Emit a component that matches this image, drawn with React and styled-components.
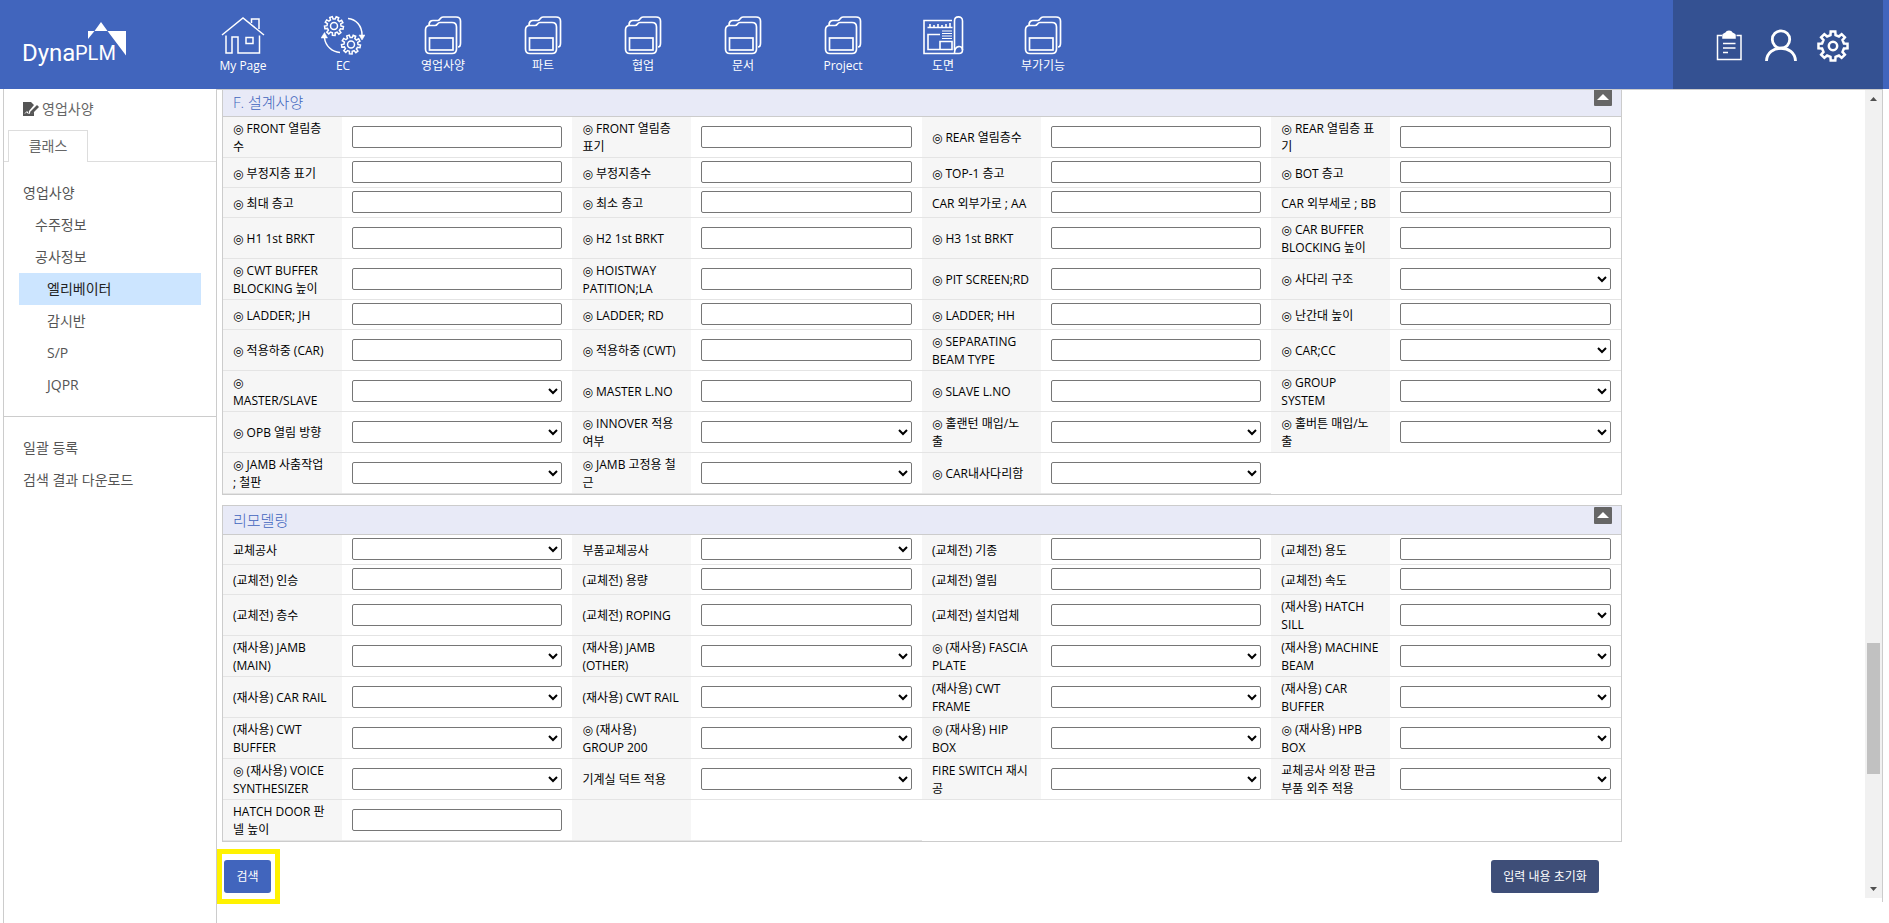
import React from 'react';
import styled, { createGlobalStyle } from 'styled-components';

const GlobalStyle = createGlobalStyle`
  * {
    box-sizing: border-box;
  }
  body {
    margin: 0;
    background: #fff;
    color: #000;
    font-family: "Open Sans", "DejaVu Sans", "Noto Sans CJK KR", sans-serif;
    font-size: 12px;
    line-height: 18px;
  }
  button, input, select {
    font: inherit;
  }
  a {
    color: inherit;
    text-decoration: none;
  }
`;

const Page = styled.div`
  display: flex;
  flex-direction: column;
  min-height: 100vh;
`;

/* ---------- top bar ---------- */

const Header = styled.header`
  display: flex;
  height: 89px;
  padding-right: 6px;
  background: #4165bd;
  color: #fff;
`;

const Logo = styled.a`
  flex: none;
  width: 193px;
  padding-left: 20px;
`;

const Nav = styled.nav`
  display: flex;
  flex: 1;
`;

const NavLink = styled.a`
  display: flex;
  flex-direction: column;
  align-items: center;
  width: 100px;
  padding-top: 15px;

  svg {
    display: block;
    margin-bottom: 2px;
  }
`;

const UserTools = styled.div`
  display: flex;
  justify-content: flex-end;
  align-items: center;
  gap: 20px;
  width: 210px;
  padding: 2px 34px 0 0;
  background: #345192;
`;

const ToolButton = styled.button`
  width: 32px;
  height: 34px;
  padding: 0;
  border: 0;
  background: none;
  color: #fff;
  cursor: pointer;

  svg {
    display: block;
  }
`;

/* ---------- sidebar ---------- */

const Body = styled.div`
  display: flex;
  flex: 1;
  padding: 0 6px 0 3px;
`;

const Sidebar = styled.aside`
  flex: none;
  width: 214px;
  border-left: 1px solid #ccc;
  border-right: 1px solid #ccc;
  color: #555;
  font-size: 14px;
`;

const SideTitle = styled.h1`
  display: flex;
  align-items: center;
  gap: 3px;
  height: 41px;
  margin: 0;
  padding: 0 0 2px 19px;
  color: #666;
  font-size: 14px;
  font-weight: 400;
`;

const Tabs = styled.div`
  display: flex;
  height: 32px;
  padding-left: 4px;
  box-shadow: inset 0 -1px #ddd;
`;

const Tab = styled.button`
  width: 80px;
  padding: 0 0 2px;
  border: 1px solid #ddd;
  border-bottom: 0;
  background: #fff;
  color: #666;
  font-size: 14px;
`;

const Tree = styled.ul`
  margin: 0;
  padding: 15px;
  list-style: none;

  & + & {
    border-top: 1px solid #ccc;
  }
`;

const TreeLink = styled.a`
  display: block;
  height: 32px;
  padding-left: ${p => 4 + p.$level * 12}px;
  line-height: 32px;
  background: ${p => (p.$active ? '#cce5ff' : 'none')};
  color: ${p => (p.$active ? '#222' : '#555')};
`;

/* ---------- form ---------- */

const Main = styled.main`
  display: flex;
  flex: 1;
  min-width: 0;
  border-top: 1px solid #ccc;
`;

const Content = styled.form`
  flex: 1;
  min-width: 0;
  overflow: hidden;
`;

const Sections = styled.div`
  display: flex;
  flex-direction: column;
  gap: 10px;
  width: calc(85% - 1px);
  margin: -3px 0 0 5px;
`;

const Section = styled.section`
  border: 1px solid #ccc;
`;

const SectionHead = styled.div`
  display: flex;
  justify-content: space-between;
  height: 29px;
  padding: 0 9px 0 10px;
  border-bottom: 1px solid #ccc;
  background: #e8eaf7;
`;

const SectionTitle = styled.h2`
  margin: 0;
  color: #4165bd;
  font-size: 15px;
  font-weight: 300;
  line-height: 28px;
`;

const Collapse = styled.button`
  width: 18px;
  height: 17px;
  margin-top: 1px;
  padding: 0;
  border: 0;
  border-radius: 1px;
  background: #666;

  svg {
    display: block;
  }
`;

const Grid = styled.table`
  width: 100%;
  border-spacing: 0;
  table-layout: fixed;
`;

const LabelCol = styled.col`
  width: 119px;
`;

const Row = styled.tr`
  height: ${p => (p.$tall ? 41 : 30)}px;
`;

const LabelCell = styled.th`
  padding: 3px 10px 1px;
  border-bottom: 1px solid #e4e4e4;
  background: #f6f6f6;
  font-weight: 400;
  text-align: left;
  white-space: pre-line;
`;

const FieldCell = styled.td`
  padding: 0 10px 1px;
  border-bottom: 1px solid #e4e4e4;
`;

const TextBox = styled.input`
  display: block;
  width: 100%;
  height: 22px;
  padding: 0 4px;
  border: 1px solid #767676;
  border-radius: 2px;
  background: #fff;
`;

const Select = styled.select`
  display: block;
  width: 100%;
  height: 22px;
  padding: 0;
  border: 1px solid #767676;
  border-radius: 2px;
  background: #fff;
`;

const Actions = styled.div`
  display: flex;
  justify-content: space-between;
  align-items: center;
  width: calc(85% - 1px);
  margin-top: 7px;
  padding-right: 18px;
`;

const Highlight = styled.div`
  padding: 6px 4px 6px 2px;
  border: 5px solid #fff200;
`;

const Button = styled.button`
  display: block;
  min-width: 47px;
  height: 33px;
  padding: 1px 12px 0;
  border: 0;
  border-radius: 3px;
  background: ${p => (p.$dark ? '#3e4e78' : '#4165bd')};
  color: #fff;
`;

/* ---------- scroll bar ---------- */

const ScrollBar = styled.div`
  display: flex;
  flex-direction: column;
  width: 18px;
  margin-bottom: 21px;
  padding-bottom: 4px;
  border-right: 1px solid #ccc;
`;

const Track = styled.div`
  flex: ${p => p.$grow} 0 0;
  background: #f1f1f1;
`;

const Thumb = styled.div`
  height: 131px;
  border: solid #f1f1f1;
  border-width: 0 2px;
  background: #c1c1c1;
`;

const Arrow = styled.svg`
  display: block;
  background: #f1f1f1;
`;

/* ---------- icons ---------- */

function gear(cx, cy, outer, inner, teeth, turn = 0) {
  const step = (Math.PI * 2) / teeth;
  const points = [];
  for (let i = 0; i < teeth; i++) {
    const a = i * step + turn;
    [[-0.29, inner], [-0.2, outer], [0.2, outer], [0.29, inner]].forEach(([k, r]) => {
      points.push(`${(cx + Math.cos(a + k * step) * r).toFixed(2)} ${(cy + Math.sin(a + k * step) * r).toFixed(2)}`);
    });
  }
  return `M${points.join('L')}Z`;
}

const LogoArt = () => (
  <svg width="110" height="75" viewBox="20 0 110 75" fill="#fff">
    <path d="M101 22 L107.5 31 H94.5Z M88 31 H94.5 L88 39Z M107.5 31 H126 V55.5Z" />
    <text x="22" y="61" fontFamily="Roboto" fontSize="24" fontWeight="400">Dyna</text>
    <text x="75" y="60" fontFamily="Roboto" fontSize="20" fontWeight="400">PLM</text>
  </svg>
);

const HomeIcon = () => (
  <svg width="44" height="40" viewBox="0 0 44 40" fill="none" stroke="#fff" strokeWidth="1.5">
    <path d="M1 20 L22 3 L43 20" />
    <path d="M30.5 8 V4 H38 V14" />
    <path d="M5 20.5 V38 H11 V22 H17 V38 H38.5 V20.5" />
    <rect x="25" y="22.5" width="7" height="6" />
  </svg>
);

const GearsIcon = () => (
  <svg width="44" height="40" viewBox="0 0 44 40" fill="none" stroke="#fff" strokeWidth="1.5">
    <path d={gear(13, 11, 9.5, 7, 9, 0.2)} />
    <circle cx="13" cy="11" r="3.5" />
    <path d={gear(30, 29.5, 9.5, 7, 9, 0.2)} />
    <circle cx="30" cy="29.5" r="3.5" />
    <path d="M27 3.5 C35 4 41 11 41 20" />
    <path d="M38 20 H44 L41 25Z M0 23 H6.5 L3.5 17.5Z" fill="#fff" strokeWidth="0.5" />
    <path d="M3.5 23 C4.5 31 11 37 19 37.5" />
  </svg>
);

const FolderIcon = () => (
  <svg width="44" height="40" viewBox="0 0 44 40" fill="none" stroke="#fff" strokeWidth="1.7">
    <path d="M8 10 C8 7 10 5.500 12 5.500 H17 C19 5.500 19 2 22 2 H35 C38 2 39.500 3.500 39.500 6 V28 C39.500 30.500 38.500 32 37 32" />
    <path d="M4.500 15 C4.500 12 6 10.500 9 10.500 H14 C17 10.500 16 7.500 19 7.500 H31 C34 7.500 35.500 9 35.500 12 V34 C35.500 37 34 38.500 31 38.500 H9 C6 38.500 4.500 37 4.500 34 Z" />
    <rect x="8.5" y="23" width="23.5" height="12" />
  </svg>
);

const DrawingIcon = () => (
  <svg width="44" height="40" viewBox="0 0 44 40" fill="none" stroke="#fff" strokeWidth="1.6">
    <path d="M31 5.500 H3 V38.500 H38 C40 38.500 41.500 37 41.500 35 V6 C41.500 0.500 33.500 0.500 33.500 6 V35" />
    <path d="M33.500 38 C33.500 30 41.500 30 41.500 35" />
    <path d="M6.500 12.500 H31.500 M9 12 V9 M13 12 V10 M17 12 V9 M21 12 V10 M25 12 V9 M29 12 V8" />
    <path d="M19 19.500 H7 V34.500 H31 V26.500 H19 V34.500" />
    <path d="M21 16 H31 M21 18.500 H31 M21 21 H31 M21 23.500 H31" strokeWidth="1.2" />
  </svg>
);

const ClipboardIcon = () => (
  <svg width="32" height="34" viewBox="0 0 32 34" fill="none" stroke="#fff" strokeWidth="1.5">
    <path d="M9 6.500 H4.500 V30.500 H28 V6.500 H23.500" />
    <path d="M10 9 V6 C10 5 12 5 13 4 C14 1.500 18 1.500 19 4 C20 5 22 5 22 6 V9Z" fill="#fff" />
    <path d="M10 14.500 H22.500 M10 19 H22.500 M10 23.500 H15" />
  </svg>
);

const UserIcon = () => (
  <svg width="32" height="34" viewBox="0 0 32 34" fill="none" stroke="#fff" strokeWidth="2.8">
    <circle cx="16" cy="10.500" r="8.700" />
    <path d="M1.500 32 C2 15 30 15 30.500 32" />
  </svg>
);

const SettingsIcon = () => (
  <svg width="32" height="34" viewBox="0 0 32 34" fill="none" stroke="#fff" strokeWidth="2.5">
    <path d={gear(16, 17, 14.7, 11.2, 8)} />
    <circle cx="16" cy="17" r="4.200" />
  </svg>
);

const NoteIcon = () => (
  <svg width="16" height="16" viewBox="0 0 16 16" fill="#555">
    <path d="M0 1 H8 L11 4 L6 10 L5.500 13 L9 12.500 L11 10.500 V15 H0Z" />
    <path d="M14 4 L16 6 L9.500 12.500 L6.500 13.500 L7.500 10.500Z" />
    <path d="M2 12.500 L4 10.500 L5 12.500" fill="none" stroke="#fff" />
  </svg>
);

const UpIcon = () => (
  <svg width="18" height="17" viewBox="0 0 18 17">
    <path d="M3 11 L9 5 L15 11Z" fill="#fff" />
  </svg>
);

/* ---------- data ---------- */

const NAV = [
  ['My Page', HomeIcon],
  ['EC', GearsIcon],
  ['영업사양', FolderIcon],
  ['파트', FolderIcon],
  ['협업', FolderIcon],
  ['문서', FolderIcon],
  ['Project', FolderIcon],
  ['도면', DrawingIcon],
  ['부가기능', FolderIcon],
];

const TREE = [
  ['영업사양', 0],
  ['수주정보', 1],
  ['공사정보', 1],
  ['엘리베이터', 2],
  ['감시반', 2],
  ['S/P', 2],
  ['JQPR', 2],
];

const LINKS = ['일괄 등록', '검색 결과 다운로드'];

// a label that starts with "v:" belongs to a drop-down
const DESIGN = [
  ['◎ FRONT 열림층\n수', '◎ FRONT 열림층\n표기', '◎ REAR 열림층수', '◎ REAR 열림층 표\n기'],
  ['◎ 부정지층 표기', '◎ 부정지층수', '◎ TOP-1 층고', '◎ BOT 층고'],
  ['◎ 최대 층고', '◎ 최소 층고', 'CAR 외부가로 ; AA', 'CAR 외부세로 ; BB'],
  ['◎ H1 1st BRKT', '◎ H2 1st BRKT', '◎ H3 1st BRKT', '◎ CAR BUFFER\nBLOCKING 높이'],
  ['◎ CWT BUFFER\nBLOCKING 높이', '◎ HOISTWAY\nPATITION;LA', '◎ PIT SCREEN;RD', 'v:◎ 사다리 구조'],
  ['◎ LADDER; JH', '◎ LADDER; RD', '◎ LADDER; HH', '◎ 난간대 높이'],
  ['◎ 적용하중 (CAR)', '◎ 적용하중 (CWT)', '◎ SEPARATING\nBEAM TYPE', 'v:◎ CAR;CC'],
  ['v:◎\nMASTER/SLAVE', '◎ MASTER L.NO', '◎ SLAVE L.NO', 'v:◎ GROUP\nSYSTEM'],
  ['v:◎ OPB 열림 방향', 'v:◎ INNOVER 적용\n여부', 'v:◎ 홀랜턴 매입/노\n출', 'v:◎ 홀버튼 매입/노\n출'],
  ['v:◎ JAMB 사춤작업\n; 철판', 'v:◎ JAMB 고정용 철\n근', 'v:◎ CAR내사다리함'],
];

const REMODEL = [
  ['v:교체공사', 'v:부품교체공사', '(교체전) 기종', '(교체전) 용도'],
  ['(교체전) 인승', '(교체전) 용량', '(교체전) 열림', '(교체전) 속도'],
  ['(교체전) 층수', '(교체전) ROPING', '(교체전) 설치업체', 'v:(재사용) HATCH\nSILL'],
  ['v:(재사용) JAMB\n(MAIN)', 'v:(재사용) JAMB\n(OTHER)', 'v:◎ (재사용) FASCIA\nPLATE', 'v:(재사용) MACHINE\nBEAM'],
  ['v:(재사용) CAR RAIL', 'v:(재사용) CWT RAIL', 'v:(재사용) CWT\nFRAME', 'v:(재사용) CAR\nBUFFER'],
  ['v:(재사용) CWT\nBUFFER', 'v:◎ (재사용)\nGROUP 200', 'v:◎ (재사용) HIP\nBOX', 'v:◎ (재사용) HPB\nBOX'],
  ['v:◎ (재사용) VOICE\nSYNTHESIZER', 'v:기계실 덕트 적용', 'v:FIRE SWITCH 재시\n공', 'v:교체공사 의장 판금\n부품 외주 적용'],
  ['HATCH DOOR 판\n넬 높이', ''],
];

function Field({ id, spec }) {
  const isSelect = spec.startsWith('v:');
  const label = isSelect ? spec.slice(2) : spec;
  if (!label) {
    return (
      <>
        <LabelCell as="td" />
        <FieldCell />
      </>
    );
  }
  return (
    <>
      <LabelCell scope="row">
        <label htmlFor={id}>{label}</label>
      </LabelCell>
      <FieldCell>
        {isSelect ? <Select id={id}><option value="" /></Select> : <TextBox id={id} type="text" />}
      </FieldCell>
    </>
  );
}

function FormSection({ name, title, rows }) {
  return (
    <Section>
      <SectionHead>
        <SectionTitle>{title}</SectionTitle>
        <Collapse type="button" aria-label={`${title} 접기`}><UpIcon /></Collapse>
      </SectionHead>
      <Grid>
        <colgroup>
          {[0, 1, 2, 3].map(i => (
            <React.Fragment key={i}>
              <LabelCol />
              <col />
            </React.Fragment>
          ))}
        </colgroup>
        <tbody>
          {rows.map((row, r) => (
            <Row key={r} $tall={row.some(spec => spec.includes('\n'))}>
              {row.map((spec, c) => <Field key={c} id={`${name}-${r}-${c}`} spec={spec} />)}
            </Row>
          ))}
        </tbody>
      </Grid>
    </Section>
  );
}

export default function App() {
  return (
    <Page>
      <GlobalStyle />
      <Header>
        <Logo href="#" aria-label="DynaPLM"><LogoArt /></Logo>
        <Nav>
          {NAV.map(([label, Icon]) => (
            <NavLink key={label} href="#">
              <Icon />
              {label}
            </NavLink>
          ))}
        </Nav>
        <UserTools>
          <ToolButton aria-label="작업 목록"><ClipboardIcon /></ToolButton>
          <ToolButton aria-label="사용자"><UserIcon /></ToolButton>
          <ToolButton aria-label="설정"><SettingsIcon /></ToolButton>
        </UserTools>
      </Header>
      <Body>
        <Sidebar>
          <SideTitle><NoteIcon />영업사양</SideTitle>
          <Tabs><Tab type="button">클래스</Tab></Tabs>
          <Tree>
            {TREE.map(([label, level]) => (
              <li key={label}>
                <TreeLink href="#" $level={level} $active={label === '엘리베이터'}>{label}</TreeLink>
              </li>
            ))}
          </Tree>
          <Tree>
            {LINKS.map(label => (
              <li key={label}><TreeLink href="#" $level={0}>{label}</TreeLink></li>
            ))}
          </Tree>
        </Sidebar>
        <Main>
          <Content onSubmit={e => e.preventDefault()}>
            <Sections>
              <FormSection name="design" title="F. 설계사양" rows={DESIGN} />
              <FormSection name="remodel" title="리모델링" rows={REMODEL} />
            </Sections>
            <Actions>
              <Highlight><Button type="submit">검색</Button></Highlight>
              <Button type="reset" $dark>입력 내용 초기화</Button>
            </Actions>
          </Content>
          <ScrollBar aria-hidden="true">
            <Arrow width="17" height="17"><path d="M5 11 L8.500 7 L12 11Z" fill="#505050" /></Arrow>
            <Track $grow={536} />
            <Thumb />
            <Track $grow={107} />
            <Arrow width="17" height="17"><path d="M5 6 L8.500 10 L12 6Z" fill="#505050" /></Arrow>
          </ScrollBar>
        </Main>
      </Body>
    </Page>
  );
}
